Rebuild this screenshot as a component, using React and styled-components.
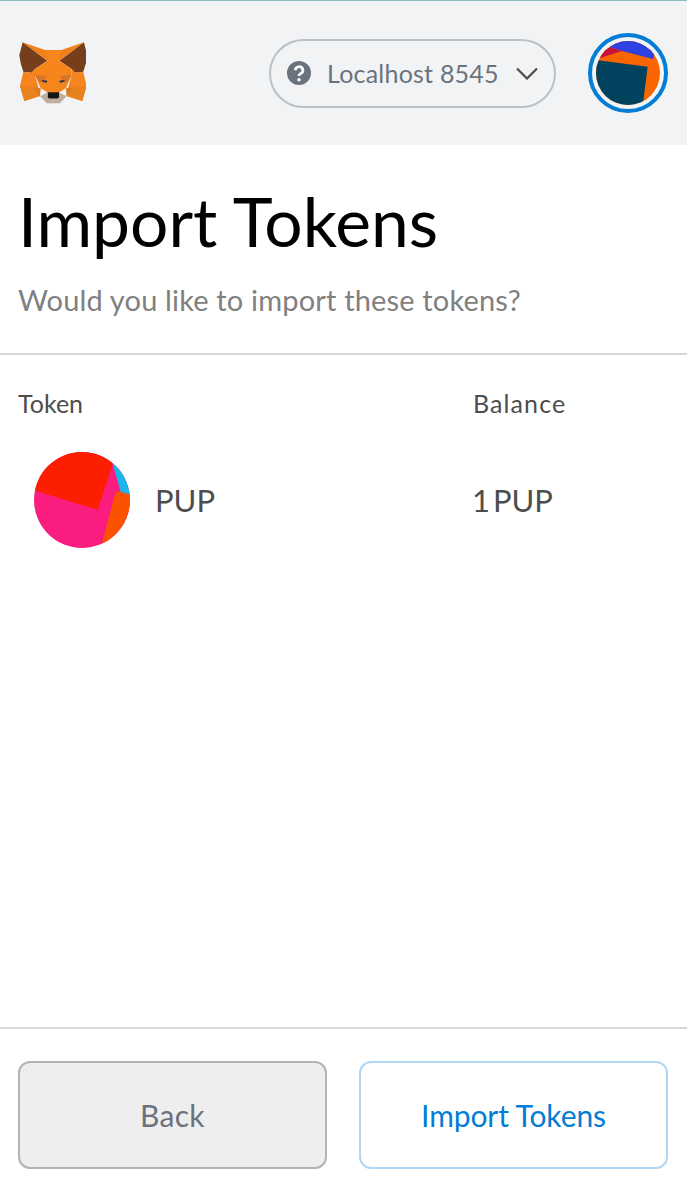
import React from 'react';
import styled, { createGlobalStyle } from 'styled-components';

const Global = createGlobalStyle`
  html, body { margin: 0; padding: 0; background: #fff; }
  body { font-family: Lato, "Open Sans", "Liberation Sans", sans-serif; }
`;

const Page = styled.div`
  width: 687px;
  height: 1197px;
  display: flex;
  flex-direction: column;
  background: #fff;
  overflow: hidden;
`;

const Header = styled.header`
  flex: none;
  height: 145px;
  box-sizing: border-box;
  border-top: 1px solid #8bbdc1;
  background: #f2f3f4;
  display: flex;
  align-items: center;
  padding: 0 19px;
`;

const Logo = styled.svg`
  width: 67px;
  height: 62px;
  flex: none;
`;

const Network = styled.div`
  margin-left: auto;
  width: 287px;
  height: 69px;
  box-sizing: border-box;
  border: 2px solid #bbc0c5;
  border-radius: 35px;
  display: flex;
  align-items: center;
  padding: 0 16px;
  color: #6a737d;
  font-size: 25px;
  letter-spacing: 0.22px;
`;

const NetworkLabel = styled.span`
  margin-left: 16px;
  flex: 1;
  white-space: nowrap;
`;

const Avatar = styled.div`
  margin-left: 32px;
  margin-top: -1px;
  width: 80px;
  height: 80px;
  box-sizing: border-box;
  border: 4px solid #037dd6;
  border-radius: 50%;
  display: flex;
  align-items: center;
  justify-content: center;
  flex: none;
`;

const Content = styled.main`
  flex: 1;
  display: flex;
  flex-direction: column;
  min-height: 0;
`;

const Intro = styled.section`
  padding: 34px 18px 0;
  border-bottom: 2px solid #d2d8dd;
  height: 210px;
  box-sizing: border-box;
`;

const Title = styled.h1`
  margin: 0;
  font-size: 67.7px;
  font-weight: 400;
  line-height: 84px;
  color: #000;
  white-space: nowrap;
`;

const Subtitle = styled.p`
  margin: 20px 0 0;
  font-size: 29px;
  letter-spacing: 0.17px;
  line-height: 34px;
  color: #808080;
  white-space: nowrap;
`;

const TokenTable = styled.section`
  flex: 1;
  padding: 34px 18px 0;
`;

const TableHead = styled.div`
  display: grid;
  grid-template-columns: 455px 1fr;
  font-size: 25px;
  line-height: 28px;
  color: #4d4d4d;
`;

const HeadCell = styled.span`
  letter-spacing: ${p => p.$spacing || 0};
`;

const TableRow = styled.div`
  display: grid;
  grid-template-columns: 455px 1fr;
  align-items: center;
  margin-top: 35px;
  font-size: 31px;
  color: #4d4d4d;
`;

const TokenCell = styled.div`
  display: flex;
  align-items: center;
  padding-left: 16px;
  gap: 25px;
`;

const Balance = styled.span`
  word-spacing: -5px;
  margin-left: -1px;
`;

const Footer = styled.footer`
  flex: none;
  height: 170px;
  box-sizing: border-box;
  border-top: 2px solid #d2d8dd;
  padding: 32px 19px 0 18px;
  display: grid;
  grid-template-columns: 309px 309px;
  justify-content: space-between;
  align-items: start;
`;

const Button = styled.button`
  height: 108px;
  box-sizing: border-box;
  border-radius: 12px;
  border: 2px solid ${p => (p.$primary ? '#b0d7f3' : '#b3b3b3')};
  background: ${p => (p.$primary ? '#fff' : '#eee')};
  color: ${p => (p.$primary ? '#037dd6' : '#6a737d')};
  font-family: inherit;
  font-size: 30px;
  letter-spacing: ${p => (p.$primary ? '-0.1px' : '0.3px')};
  padding: 0;
`;

const FoxSide = ({ flip }) => (
  <g transform={flip ? 'translate(66.6 0) scale(-1 1)' : undefined}>
    <polygon fill="#763e1a" points="2.7,0.3 27.3,18.7 15,27 11.7,30.7 3.3,29.7 0.7,21.3 -0.7,13" />
    <polygon fill="#f0801a" points="2.7,0.3 25,8 33.3,8 33.3,18.7 27.3,18.7" />
    <polygon fill="#f5841f" points="3.3,29.7 11.7,30.7 15,27 15,33 18.3,45.3 20,54 4.3,59 0,44" />
    <polygon fill="#e8821e" points="0,44 12.3,45.3 20,54 4.3,59" />
    <polygon fill="#d87c1e" points="12.3,45.3 20.7,46.3 20,54" />
    <polygon fill="#f6851b" points="15,27 27.3,18.7 33.3,18.7 33.3,50.5 27.7,50.5 20.7,46.3 15,33" />
    <polygon fill="#d9752a" points="15,33 26.7,34 22.7,41.3 18.3,39" />
    <polygon fill="#c0ad9e" points="20,54 27.7,50.7 33.3,50.7 33.3,61.3 26.7,61.3" />
    <polygon fill="#233447" points="21.7,38 27.3,38.7 26.5,40.7 23,40" />
  </g>
);

const Fox = () => (
  <Logo viewBox="-1 0 67 62">
    <FoxSide />
    <FoxSide flip />
    <polygon fill="#f6851b" points="25,8 41.6,8 38,18.7 39,50.5 27.6,50.5 28.6,18.7" />
    <polygon fill="#161616" points="27.7,50.3 39,50.3 39,55.5 37.3,56.5 29.3,56.5 27.7,55.5" />
    <polygon fill="#c0ad9e" points="24.5,52 27.7,50.3 27.7,55 26,55" />
    <polygon fill="#c0ad9e" points="42,52 39,50.3 39,55 40.6,55" />
  </Logo>
);

const AccountIdenticon = () => (
  <svg width="64" height="64" viewBox="0 0 64 64">
    <defs>
      <clipPath id="acc"><circle cx="32" cy="32" r="32" /></clipPath>
    </defs>
    <g clipPath="url(#acc)">
      <rect width="64" height="64" fill="#f96500" />
      <polygon points="13,6 26,10 57,18 62,0 13,0" fill="#2c41e0" />
      <polygon points="0,20 13,0 13,6 26,10 4,17" fill="#c8123a" />
      <polygon points="-3,18.5 51.7,25.7 46,70 -3,70" fill="#01425f" />
    </g>
  </svg>
);

const TokenIdenticon = () => (
  <svg width="96" height="96" viewBox="0 0 96 96">
    <defs>
      <clipPath id="tok"><circle cx="48" cy="48" r="48" /></clipPath>
    </defs>
    <g clipPath="url(#tok)">
      <rect width="96" height="96" fill="#fb1c80" />
      <polygon points="-4,37 63.7,58 78.7,12 78,-4 -4,-4" fill="#fb1f00" />
      <polygon points="78.7,12 86.7,40 100,44 100,0 78,0" fill="#19b6eb" />
      <polygon points="82,38.7 100,44 100,100 67,100 67.7,92" fill="#fb5200" />
    </g>
  </svg>
);

const HelpIcon = () => (
  <svg width="24" height="24" viewBox="0 0 24 24" style={{ flex: 'none' }}>
    <circle cx="12" cy="12" r="12" fill="#6a737d" />
    <path d="M8.3 9.2 A3.8 3.6 0 1 1 13.6 12.6 C12.4 13.2 12 13.8 12 15" fill="none" stroke="#fff" strokeWidth="2.7" />
    <circle cx="12" cy="18.7" r="1.7" fill="#fff" />
  </svg>
);

const Chevron = () => (
  <svg width="22" height="13" viewBox="0 0 22 13" style={{ flex: 'none' }}>
    <path d="M1 1.5 L11 11.5 L21 1.5" fill="none" stroke="#4d4d4d" strokeWidth="2.2" />
  </svg>
);

export default function App() {
  return (
    <Page>
      <Global />
      <Header>
        <Fox />
        <Network>
          <HelpIcon />
          <NetworkLabel>Localhost 8545</NetworkLabel>
          <Chevron />
        </Network>
        <Avatar><AccountIdenticon /></Avatar>
      </Header>
      <Content>
        <Intro>
          <Title>Import Tokens</Title>
          <Subtitle>Would you like to import these tokens?</Subtitle>
        </Intro>
        <TokenTable>
          <TableHead>
            <HeadCell>Token</HeadCell>
            <HeadCell $spacing="1.1px">Balance</HeadCell>
          </TableHead>
          <TableRow>
            <TokenCell><TokenIdenticon /><span>PUP</span></TokenCell>
            <Balance>1 PUP</Balance>
          </TableRow>
        </TokenTable>
      </Content>
      <Footer>
        <Button>Back</Button>
        <Button $primary>Import Tokens</Button>
      </Footer>
    </Page>
  );
}
